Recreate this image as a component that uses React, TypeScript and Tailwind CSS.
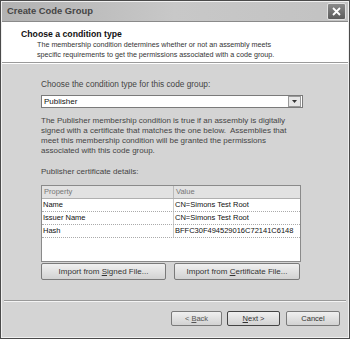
import React from "react";

const font = { fontFamily: '"Liberation Sans", Arial, sans-serif' };

function Btn({ children, className = "" }: { children: React.ReactNode; className?: string }) {
  return (
    <div
      className={
        "flex items-center justify-center border border-[#7a7a7a] rounded-[2px] bg-gradient-to-b from-[#f0f0f0] to-[#d2d2d2] text-[#333] " +
        className
      }
    >
      {children}
    </div>
  );
}

export default function App() {
  const rows = [
    ["Name", "CN=Simons Test Root"],
    ["Issuer Name", "CN=Simons Test Root"],
    ["Hash", "BFFC30F494529016C72141C6148"],
  ];
  return (
    <div style={font} className="w-[350px] h-[339px] bg-[#d4d4d4] border border-[#4a4a4a] flex flex-col overflow-hidden">
      <div className="flex-1 flex flex-col border border-[#f0f0f0]">
        {/* title bar */}
        <div className="h-[20px] flex items-center justify-between pl-[5px] pr-[2px] bg-gradient-to-r from-[#b2b2b2] via-[#c8c8c8] to-[#c2c2c2] border-b border-[#8a8a8a]">
          <span className="text-[9.4px] font-bold text-[#454545]">Create Code Group</span>
          <div className="w-[19px] h-[17px] rounded-[2px] border border-[#e0e0e0] bg-gradient-to-b from-[#8a8a8a] to-[#5c5c5c] flex items-center justify-center">
            <svg width="11" height="11" viewBox="0 0 11 11">
              <path d="M2 2 L9 9 M9 2 L2 9" stroke="#fff" strokeWidth="1.8" />
            </svg>
          </div>
        </div>
        {/* header */}
        <div className="h-[41px] bg-white pl-[19px] pt-[6px] border-b border-[#9a9a9a]">
          <div className="text-[8.7px] font-bold text-[#111] leading-[12px]">Choose a condition type</div>
          <div className="pl-[16px] text-[7.2px] leading-[10px] text-[#333]">
            <div>The membership condition determines whether or not an assembly meets</div>
            <div>specific requirements to get the permissions associated with a code group.</div>
          </div>
        </div>
        <div className="h-px bg-white" />
        {/* body */}
        <div className="flex-1 flex flex-col pl-[39px] text-[8px] text-[#444]">
          <div className="w-[262px] flex flex-col">
            <div className="mt-[15px] leading-[10px] text-[8.3px]">Choose the condition type for this code group:</div>
            <div className="mt-[6px] h-[13px] bg-white border border-[#7a7a7a] flex items-center justify-between">
              <span className="pl-[2px] text-[#111]">Publisher</span>
              <div className="w-[13px] h-[11px] mr-[1px] border border-[#999] bg-[#e6e6e6] flex items-center justify-center">
                <svg width="5" height="3" viewBox="0 0 5 3">
                  <path d="M0 0 L5 0 L2.5 3 Z" fill="#333" />
                </svg>
              </div>
            </div>
            <div className="mt-[8px] leading-[10px] text-[8px]">
              <div>The Publisher membership condition is true if an assembly is digitally</div>
              <div>signed with a certificate that matches the one below.&nbsp; Assemblies that</div>
              <div>meet this membership condition will be granted the permissions</div>
              <div>associated with this code group.</div>
            </div>
            <div className="mt-[11px] leading-[10px] text-[8px]">Publisher certificate details:</div>
            <div className="mt-[8px] w-[260px] h-[77px] bg-white border border-[#8a8a8a] flex flex-col text-[7.5px]">
              <div className="h-[13px] flex bg-[#e2e2e2] border-b border-[#b0b0b0] text-[#777]">
                <div className="w-[132px] pl-[2px] flex items-center border-r border-[#bbb]">Property</div>
                <div className="flex-1 pl-[2px] flex items-center">Value</div>
              </div>
              {rows.map(([k, v]) => (
                <div key={k} className="h-[13px] flex border-b border-dotted border-[#aaa] text-[#111]">
                  <div className="w-[132px] pl-[1px] flex items-center border-r border-[#ccc]">{k}</div>
                  <div className="flex-1 pl-[1px] flex items-center">{v}</div>
                </div>
              ))}
            </div>
            <div className="mt-[1px] flex gap-[8px]">
              <Btn className="w-[125px] h-[17px] text-[8px]">
                <span>
                  Import from <u>S</u>igned File...
                </span>
              </Btn>
              <Btn className="w-[126px] h-[17px] text-[8px]">
                <span>
                  Import from <u>C</u>ertificate File...
                </span>
              </Btn>
            </div>
          </div>
          <div className="flex-1" />
        </div>
        {/* bottom */}
        <div className="h-px bg-[#9a9a9a] mx-[2px]" />
        <div className="h-px bg-[#f4f4f4] mx-[2px]" />
        <div className="h-[35px] flex justify-end items-start pt-[9px] pr-[8px] gap-[5px] text-[7.5px]">
          <Btn className="w-[51px] h-[15px] text-[#555]">
            <span>
              &lt; <u>B</u>ack
            </span>
          </Btn>
          <Btn className="w-[53px] h-[15px] border-[#444]">
            <span>
              <u>N</u>ext &gt;
            </span>
          </Btn>
          <Btn className="w-[54px] h-[15px] ml-[1px]">Cancel</Btn>
        </div>
      </div>
    </div>
  );
}
